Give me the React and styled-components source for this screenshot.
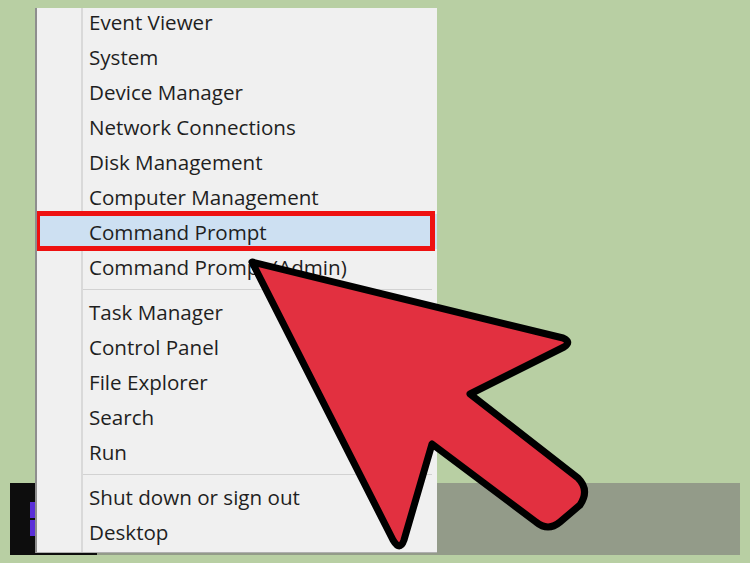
import { Fragment } from "react";
import styled, { createGlobalStyle } from "styled-components";

const GlobalStyle = createGlobalStyle`
  html, body {
    margin: 0;
    padding: 0;
    background: #b8cfa3;
  }
  body {
    font-family: "Open Sans", "Noto Sans", "Liberation Sans", sans-serif;
  }
`;

// 바탕
const Desktop = styled.div`
  position: relative;
  width: 750px;
  height: 563px;
  overflow: hidden;
  background: #b8cfa3;
  padding: 483px 10px 8px;
  box-sizing: border-box;
`;

const Taskbar = styled.div`
  display: flex;
  height: 72px;
  background: #939b89;
`;

const StartArea = styled.div`
  display: flex;
  align-items: center;
  width: 87px;
  padding-left: 20px;
  box-sizing: border-box;
  background: #0d0d0d;
`;

const WinLogo = styled.div`
  display: grid;
  grid-template-columns: 16px 16px;
  gap: 2px;
  & > span {
    display: block;
    height: 16px;
    background: #5a2fd8;
  }
`;

// 메뉴
const Menu = styled.div`
  position: absolute;
  left: 35px;
  top: 8px;
  width: 402px;
  height: 545px;
  background: #f0f0f0;
  border-left: 2px solid #8e8e8e;
  border-bottom: 1px solid #b0b0b0;
  box-sizing: border-box;
  overflow: hidden;
  &::before {
    content: "";
    position: absolute;
    left: 44px;
    top: 0;
    bottom: 0;
    width: 2px;
    background: #d9d9d9;
  }
`;

const List = styled.ul`
  list-style: none;
  margin: -4px 0 0;
  padding: 0;
`;

const Item = styled.li`
  position: relative;
  height: 35px;
  display: flex;
  align-items: center;
  padding-left: 52px;
  font-size: 20.6px;
  color: #1f1f1f;
  background: ${(p) => (p.$active ? "#cde0f2" : "transparent")};
  ${(p) =>
    p.$active &&
    `
    &::after {
      content: "";
      position: absolute;
      left: -2px;
      right: 2px;
      top: -3px;
      bottom: -2px;
      border: 5px solid #ee1111;
    }
  `}
`;

const Separator = styled.li`
  height: 10px;
  display: flex;
  align-items: center;
  padding-left: 46px;
  padding-right: 5px;
  &::after {
    content: "";
    flex: 1;
    height: 1px;
    background: #d2d2d2;
  }
`;

const Arrow = styled.svg`
  position: absolute;
  left: 0;
  top: 0;
  pointer-events: none;
`;

const groups = [
  [
    "Event Viewer",
    "System",
    "Device Manager",
    "Network Connections",
    "Disk Management",
    "Computer Management",
    "Command Prompt",
    "Command Prompt (Admin)",
  ],
  ["Task Manager", "Control Panel", "File Explorer", "Search", "Run"],
  ["Shut down or sign out", "Desktop"],
];

export default function App() {
  return (
    <>
      <GlobalStyle />
      <Desktop>
        <Taskbar>
          <StartArea>
            <WinLogo>
              <span />
              <span />
              <span />
              <span />
            </WinLogo>
          </StartArea>
        </Taskbar>

        <Menu>
          <List>
            {groups.map((group, gi) => (
              <Fragment key={gi}>
                {gi > 0 && <Separator />}
                {group.map((label) => (
                  <Item key={label} $active={label === "Command Prompt"}>
                    {label}
                  </Item>
                ))}
              </Fragment>
            ))}
          </List>
        </Menu>

        {/* 화살표 */}
        <Arrow width="750" height="563" viewBox="0 0 750 563">
          <path
            d="M252 262 L563 338 Q572 342 564 347 L470 394 L578 478 Q590 490 580 505 L560 522 Q548 532 536 522 L432 444 L404 540 Q400 552 393 540 Z"
            fill="#e23040"
            stroke="#000"
            strokeWidth="7"
            strokeLinejoin="round"
          />
        </Arrow>
      </Desktop>
    </>
  );
}
